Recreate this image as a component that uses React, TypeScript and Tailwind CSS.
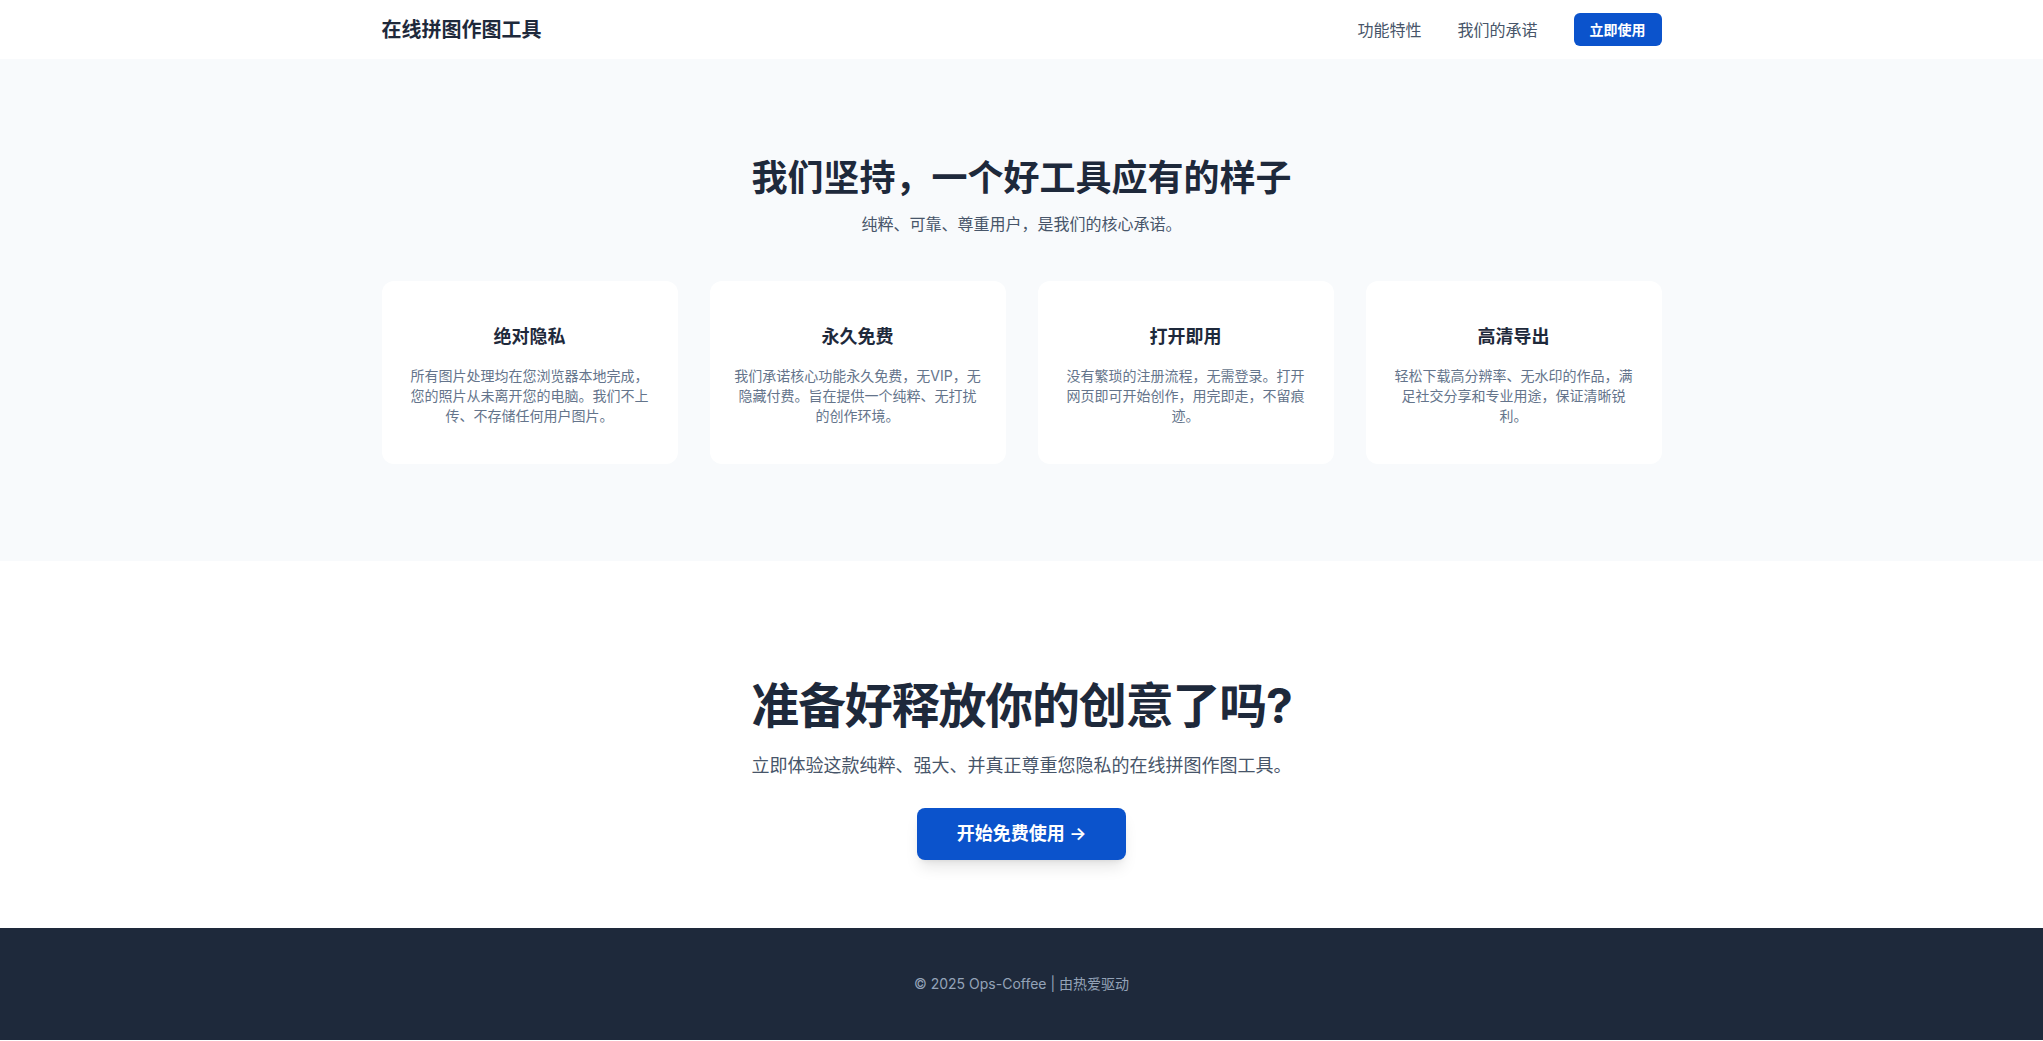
const features = [
  {
    title: "绝对隐私",
    desc: "所有图片处理均在您浏览器本地完成，您的照片从未离开您的电脑。我们不上传、不存储任何用户图片。",
  },
  {
    title: "永久免费",
    desc: "我们承诺核心功能永久免费，无VIP，无隐藏付费。旨在提供一个纯粹、无打扰的创作环境。",
  },
  {
    title: "打开即用",
    desc: "没有繁琐的注册流程，无需登录。打开网页即可开始创作，用完即走，不留痕迹。",
  },
  {
    title: "高清导出",
    desc: "轻松下载高分辨率、无水印的作品，满足社交分享和专业用途，保证清晰锐利。",
  },
];

export default function App() {
  return (
    <div className="min-h-screen bg-white font-['Inter','Noto_Sans_CJK_SC',sans-serif] text-[#1e293b]">
      <header className="bg-white">
        <div className="mx-auto flex h-[59px] max-w-[1280px] items-center justify-between">
          <div className="text-xl font-bold">在线拼图作图工具</div>
          <nav className="flex items-center gap-9">
            <a className="text-base text-[#475569]">功能特性</a>
            <a className="text-base text-[#475569]">我们的承诺</a>
            <button className="flex h-[33px] items-center rounded-md bg-[#0b53cc] px-4 text-sm font-semibold text-white">
              立即使用
            </button>
          </nav>
        </div>
      </header>

      <section className="bg-[#f8fafc] pt-[95px] pb-[97px]">
        <div className="mx-auto max-w-[1280px] text-center">
          <h2 className="text-4xl leading-[48px] font-bold">我们坚持，一个好工具应有的样子</h2>
          <p className="mt-[10px] text-base text-[#475569]">纯粹、可靠、尊重用户，是我们的核心承诺。</p>
          <div className="mt-[45px] grid grid-cols-4 gap-8">
            {features.map((f) => (
              <div key={f.title} className="rounded-xl bg-white px-6 pt-[42px] pb-[38px]">
                <h3 className="mb-[15px] text-lg font-semibold leading-7">{f.title}</h3>
                <p className="text-sm text-[#64748b]">{f.desc}</p>
              </div>
            ))}
          </div>
        </div>
      </section>

      <section className="bg-white pt-[121px] pb-[68px] text-center">
        <h2 className="text-5xl font-bold tracking-tight">准备好释放你的创意了吗?</h2>
        <p className="mt-[22px] text-lg text-[#475569]">
          立即体验这款纯粹、强大、并真正尊重您隐私的在线拼图作图工具。
        </p>
        <button className="mt-7 rounded-lg bg-[#0b53cc] px-10 py-3 text-lg font-semibold text-white shadow-lg">
          开始免费使用 →
        </button>
      </section>

      <footer className="bg-[#1e293b] py-[46px] text-center">
        <p className="text-sm text-[#94a3b8]">© 2025 Ops-Coffee | 由热爱驱动</p>
      </footer>
    </div>
  );
}
